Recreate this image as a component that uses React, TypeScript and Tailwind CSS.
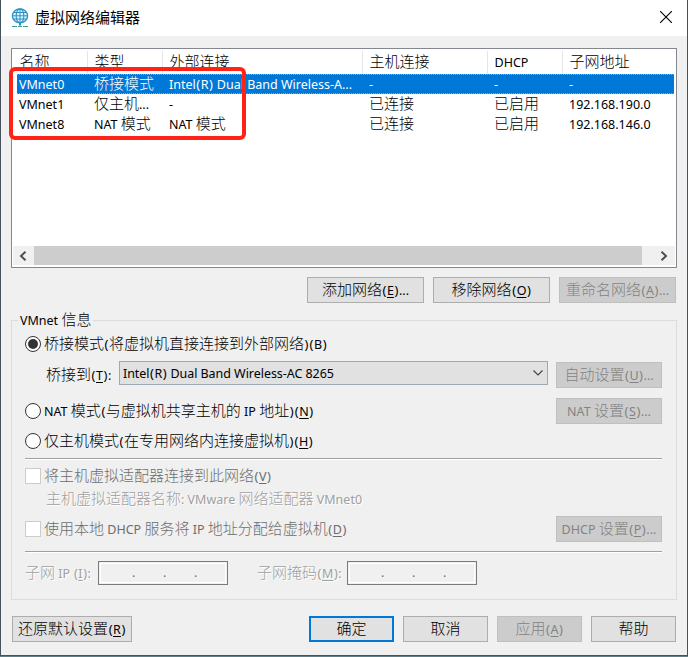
import React from 'react';

// CJK glyphs are drawn larger than the Latin ones, "&" marks the accelerator key
function Label({ text }: { text: string }) {
    const parts = text.split(/(&[A-Z]|[()]|[\x20-\x25\x27\x2a-\x7e]+)/).filter(Boolean);
    return (
        <span className="whitespace-pre">
            {parts.map((part, idx) => {
                if (part === '(' || part === ')') {
                    return <span key={idx} className="inline-block w-[5px] text-center text-[13px]">{part}</span>;
                }
                if (part[0] === '&') {
                    return <span key={idx} className="text-[12.5px] underline underline-offset-2">{part.slice(1)}</span>;
                }
                if (/^[\x20-\x7e]/.test(part)) {
                    return <span key={idx} className="text-[12.5px]">{part}</span>;
                }
                return <span key={idx} className="text-[15px] font-light">{part}</span>;
            })}
        </span>
    );
}

type ButtonProps = { text: string; className: string; disabled?: boolean; primary?: boolean };

function Button({ text, className, disabled, primary }: ButtonProps) {
    let look = 'border border-[#adadad] bg-[#e1e1e1] text-black';
    if (disabled) look = 'border border-[#bfbfbf] bg-[#cccccc] text-[#838383]';
    if (primary) look = 'border-2 border-[#0078d7] bg-[#e1e1e1] text-black';
    return (
        <button disabled={disabled} className={`flex h-[26px] shrink-0 items-center justify-center pb-[2px] leading-none ${look} ${className}`}>
            <Label text={text} />
        </button>
    );
}

function Radio({ text, checked }: { text: string; checked?: boolean }) {
    return (
        <label className="flex items-center">
            <span className="mr-[3px] flex size-4 items-center justify-center rounded-full border border-[#333] bg-white">
                {checked && <span className="size-[10px] rounded-full bg-[#333]" />}
            </span>
            <span className="pb-[2px]"><Label text={text} /></span>
        </label>
    );
}

function Checkbox({ text }: { text: string }) {
    return (
        <label className="flex items-center text-[#6d6d6d]">
            <span className="mr-[3px] size-4 border border-[#cccccc] bg-white" />
            <span className="pb-[2px]"><Label text={text} /></span>
        </label>
    );
}

function Divider() {
    return <div className="h-[2px] w-[637px] border-t border-[#a0a0a0] bg-white" />;
}

function IpField() {
    return (
        <div className="flex h-6 w-[130px] border border-[#7a7a7a] p-px">
            <div className="flex flex-1 items-center border border-white pl-[31px] text-[12.5px] leading-none text-[#6d6d6d]">
                <span className="w-[31px]">.</span>
                <span className="w-[31px]">.</span>
                <span>.</span>
            </div>
        </div>
    );
}

function GlobeIcon() {
    return (
        <svg width="18" height="20" viewBox="0 0 18 20" fill="none">
            <ellipse cx="9" cy="7.800" rx="7.600" ry="6.900" fill="#e4f4fb" stroke="#2c93c4" strokeWidth="1.4" />
            <ellipse cx="9" cy="7.800" rx="3.900" ry="6.900" stroke="#2c93c4" strokeWidth="1.1" />
            <path d="M2.500 4.500h13M1.500 7.800h15M2.500 11h13M9 1v14" stroke="#2c93c4" strokeWidth="1" />
            <path d="M9 14.500v3" stroke="#2c93c4" strokeWidth="2" />
            <path d="M1 18.500h5M7 18.500h4M12 18.500h5" stroke="#3f9d86" strokeWidth="1.200" />
        </svg>
    );
}

const columns = ['名称', '类型', '外部连接', '主机连接', 'DHCP', '子网地址'];

const networks = [
    ['VMnet0', '桥接模式', 'Intel(R) Dual Band Wireless-A...', '-', '-', '-'],
    ['VMnet1', '仅主机...', '-', '已连接', '已启用', '192.168.190.0'],
    ['VMnet8', 'NAT 模式', 'NAT 模式', '已连接', '已启用', '192.168.146.0'],
];

export default function App() {
    return (
        <div className="h-[657px] w-[688px] overflow-hidden bg-[#5d7f89] pb-px font-['Noto_Sans','Noto_Sans_CJK_SC',sans-serif] leading-none text-black">
            <div className="h-[656px] border-x border-b border-[#46535e] bg-[#f0f0f0]">
                <header className="flex h-9 items-center bg-white pr-[15px] pl-[10px]">
                    <GlobeIcon />
                    <h1 className="ml-[6px] pb-[2px] text-[15px]">虚拟网络编辑器</h1>
                    <svg className="mb-[2px] ml-auto" width="12" height="12" viewBox="0 0 12 12" stroke="#000" strokeWidth="1.1">
                        <path d="M0 0l12 12M12 0L0 12" />
                    </svg>
                </header>

                <main className="px-[10px] pt-3">
                    {/* Network list */}
                    <div className="relative flex h-[220px] w-[666px] flex-col border border-[#828790] bg-white p-px">
                        <div className="grid h-6 grid-cols-[75px_75px_200px_125px_75px_1fr] pt-px">
                            {columns.map((name) => (
                                <div key={name} className="flex items-center border-r border-[#e5e5e5] pb-[3px] pl-[6.5px] last:border-0">
                                    <Label text={name} />
                                </div>
                            ))}
                        </div>
                        {networks.map((row, idx) => (
                            <div key={row[0]} className="h-5 pr-px pl-1">
                                <div className={`grid h-5 grid-cols-[75px_75px_200px_125px_75px_1fr] ${idx === 0 ? 'border-y border-dotted border-[#ff8728] bg-[#0078d7] text-white' : ''}`}>
                                    {row.map((cell, i) => (
                                        <div key={i} className="flex items-center pb-[2px] pl-[2px]">
                                            <Label text={cell} />
                                        </div>
                                    ))}
                                </div>
                            </div>
                        ))}
                        <div className="mt-auto mb-px flex h-[19px] bg-[#f0f0f0]">
                            <div className="flex w-[21px] items-center justify-center pr-[2px]">
                                <svg width="8" height="10" viewBox="0 0 8 10" fill="none" stroke="#505050" strokeWidth="2">
                                    <path d="M6.5 .7L2 5l4.500 4.300" />
                                </svg>
                            </div>
                            <div className="w-[608px] bg-[#cdcdcd]" />
                            <div className="flex flex-1 items-center justify-center pl-[11px]">
                                <svg width="8" height="10" viewBox="0 0 8 10" fill="none" stroke="#505050" strokeWidth="2">
                                    <path d="M1.500 .7L6 5l-4.500 4.300" />
                                </svg>
                            </div>
                        </div>
                        {/* Highlight frame */}
                        <div className="pointer-events-none absolute top-[18px] -left-[3px] h-[73px] w-[237px] rounded-md border-4 border-[#ff2216]" />
                    </div>

                    <div className="mt-[9px] flex justify-end gap-[9px] pr-px">
                        <Button text="添加网络(&E)..." className="w-[117px]" />
                        <Button text="移除网络(&O)" className="w-[117px]" />
                        <Button text="重命名网络(&A)..." className="w-[117px]" disabled />
                    </div>

                    {/* Settings of the selected network */}
                    <fieldset className="mt-[9px] h-[288px] w-[666px] border border-[#dcdcdc] pl-[13px]">
                        <legend className="-ml-[7px] flex h-4 items-center px-[2px] pb-[2px]">
                            <Label text="VMnet 信息" />
                        </legend>
                        <div className="mt-[7px] flex h-[18px] items-center">
                            <Radio text="桥接模式(将虚拟机直接连接到外部网络)(B)" checked />
                        </div>
                        <div className="mt-2 flex h-[27px] items-start pl-[21px]">
                            <div className="flex h-[27px] w-[73px] items-center pb-px"><Label text="桥接到(&T):" /></div>
                            <div className="flex h-6 w-[429px] items-center justify-between border border-[#a0a8b4] bg-[#e1e1e1] pr-[4px] pl-[3px]">
                                <span className="pb-[2px] tracking-[-0.05px]"><Label text="Intel(R) Dual Band Wireless-AC 8265" /></span>
                                <svg width="10" height="6" viewBox="0 0 10 6" fill="none" stroke="#404040" strokeWidth="1.1">
                                    <path d="M.5 .5L5 5 9.500 .5" />
                                </svg>
                            </div>
                            <Button text="自动设置(&U)..." className="mt-px ml-2 w-[106px]" disabled />
                        </div>
                        <div className="mt-[10px] flex h-[26px] items-center justify-between pr-[14px]">
                            <Radio text="NAT 模式(与虚拟机共享主机的 IP 地址)(&N)" />
                            <Button text="NAT 设置(&S)..." className="w-[106px]" disabled />
                        </div>
                        <div className="mt-2 mb-[8px] flex h-[18px] items-center">
                            <Radio text="仅主机模式(在专用网络内连接虚拟机)(&H)" />
                        </div>
                        <Divider />
                        <div className="mt-[7px] flex h-[18px] items-center">
                            <Checkbox text="将主机虚拟适配器连接到此网络(&V)" />
                        </div>
                        <p className="mt-[4px] flex h-[18px] items-center pl-[21px] text-[#a0a0a0] [text-shadow:1px_1px_0_#fff]">
                            <Label text="主机虚拟适配器名称: VMware 网络适配器 VMnet0" />
                        </p>
                        <div className="mt-[9px] mb-[9px] flex h-[26px] items-center justify-between pr-[14px]">
                            <Checkbox text="使用本地 DHCP 服务将 IP 地址分配给虚拟机(&D)" />
                            <Button text="DHCP 设置(&P)..." className="w-[106px]" disabled />
                        </div>
                        <Divider />
                        <div className="mt-2 flex items-center text-[#a0a0a0]">
                            <span className="w-[73px] pb-[2px] [text-shadow:1px_1px_0_#fff]"><Label text="子网 IP (&I):" /></span>
                            <IpField />
                            <span className="ml-[29px] w-[90px] pb-[2px] [text-shadow:1px_1px_0_#fff]"><Label text="子网掩码(&M):" /></span>
                            <IpField />
                        </div>
                    </fieldset>

                    <footer className="mt-4 flex gap-[9px] pl-px">
                        <Button text="还原默认设置(&R)" className="mr-auto w-[120px]" />
                        <Button text="确定" className="w-[85px]" primary />
                        <Button text="取消" className="w-[85px]" />
                        <Button text="应用(&A)" className="w-[85px]" disabled />
                        <Button text="帮助" className="mr-px w-[85px]" />
                    </footer>
                </main>
            </div>
        </div>
    );
}
